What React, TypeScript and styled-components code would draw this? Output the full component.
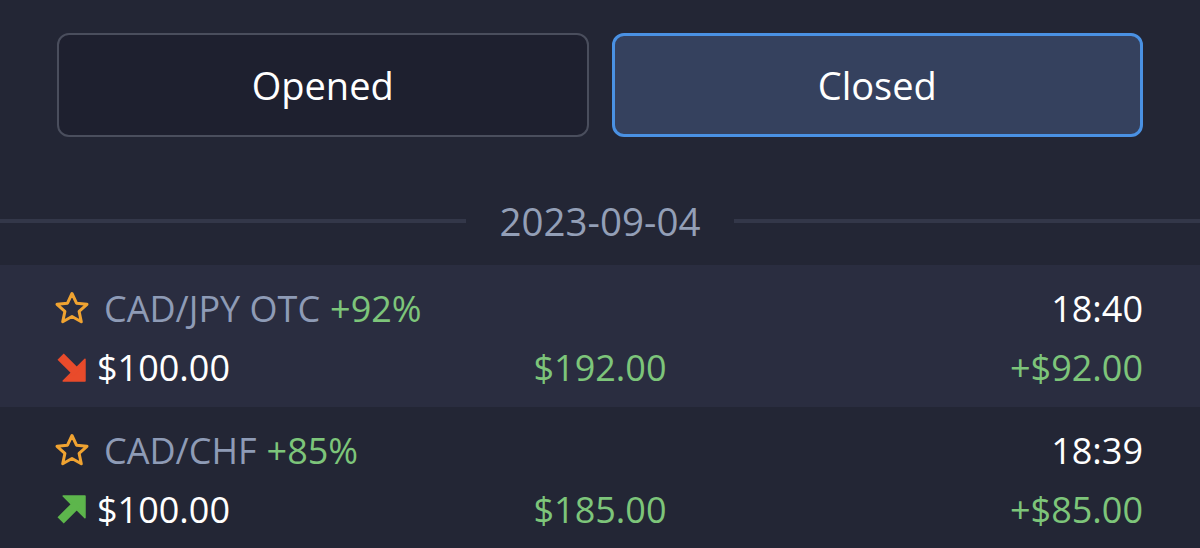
import styled, { createGlobalStyle } from "styled-components";

const GlobalStyle = createGlobalStyle`
  body {
    margin: 0;
    background: #232635;
    font-family: "Open Sans", "Noto Sans", sans-serif;
    color: #fff;
  }
`;

const Page = styled.div`
  width: 1200px;
  height: 548px;
  overflow: hidden;
  background: #232635;
`;

const Tabs = styled.div`
  display: grid;
  grid-template-columns: 1fr 1fr;
  gap: 23px;
  padding: 33px 57px 0;
`;

const Tab = styled.div<{ $active?: boolean }>`
  height: 104px;
  box-sizing: border-box;
  display: flex;
  align-items: center;
  justify-content: center;
  border-radius: 12px;
  font-size: 38px;
  color: #fff;
  background: ${(p) => (p.$active ? "#35415e" : "#1e202f")};
  border: ${(p) => (p.$active ? "3px solid #4a91e3" : "2px solid #4a4e5d")};
`;

const Separator = styled.div`
  display: flex;
  align-items: center;
  gap: 34px;
  height: 52px;
  margin: 58px 0 18px;
  &::before,
  &::after {
    content: "";
    flex: 1;
    height: 4px;
    background: #333749;
  }
`;

const DateLabel = styled.span`
  font-size: 38.5px;
  color: #939fb7;
`;

const Row = styled.div<{ $shaded?: boolean }>`
  background: ${(p) => (p.$shaded ? "#2a2d40" : "transparent")};
  padding: 18px 57px 15px;
  display: flex;
  flex-direction: column;
  gap: 9px;
`;

const Line = styled.div`
  height: 50px;
  display: grid;
  grid-template-columns: 1fr auto 1fr;
  align-items: center;
  font-size: 36px;
`;

const Asset = styled.div`
  display: flex;
  align-items: center;
  gap: 14px;
  color: #8e9bb6;
`;

const Payout = styled.span`
  color: #7dc57a;
  margin-left: -4px;
`;

const Bet = styled.div`
  display: flex;
  align-items: center;
  gap: 11px;
  color: #fff;
`;

const Amount = styled.span`
  color: #7dc57a;
`;

const Right = styled.span<{ $green?: boolean }>`
  justify-self: end;
  color: ${(p) => (p.$green ? "#7dc57a" : "#fff")};
`;

const Star = () => (
  <svg width="36" height="34" viewBox="0 0 36 34" style={{ marginLeft: -3 }}>
    <path
      d="M18 2.5 L22.5 12.2 L33 13.3 L25.1 20.4 L27.3 30.8 L18 25.5 L8.7 30.8 L10.9 20.4 L3 13.3 L13.5 12.2 Z"
      fill="none"
      stroke="#f0a331"
      strokeWidth="3"
      strokeLinejoin="round"
    />
  </svg>
);

const Arrow = ({ up }: { up?: boolean }) => (
  <svg
    width="29"
    height="29"
    viewBox="0 0 28 28"
    style={{ transform: up ? "scaleY(-1)" : undefined }}
  >
    <g fill={up ? "#5db64c" : "#e94b2b"} stroke={up ? "#5db64c" : "#e94b2b"}>
      <polygon points="27,27 27,6 6,27" strokeWidth="1.5" strokeLinejoin="round" />
      <line x1="3.5" y1="3.5" x2="19" y2="19" strokeWidth="8.5" />
    </g>
  </svg>
);

type Trade = {
  asset: string;
  payout: string;
  time: string;
  up: boolean;
  bet: string;
  total: string;
  profit: string;
};

const trades: Trade[] = [
  { asset: "CAD/JPY OTC", payout: "+92%", time: "18:40", up: false, bet: "$100.00", total: "$192.00", profit: "+$92.00" },
  { asset: "CAD/CHF", payout: "+85%", time: "18:39", up: true, bet: "$100.00", total: "$185.00", profit: "+$85.00" },
];

export default function App() {
  return (
    <Page>
      <GlobalStyle />
      <Tabs>
        <Tab>Opened</Tab>
        <Tab $active>Closed</Tab>
      </Tabs>
      <Separator>
        <DateLabel>2023-09-04</DateLabel>
      </Separator>
      {trades.map((t, i) => (
        <Row key={t.asset} $shaded={i % 2 === 0}>
          <Line>
            <Asset>
              <Star />
              <span>{t.asset}</span>
              <Payout>{t.payout}</Payout>
            </Asset>
            <span />
            <Right>{t.time}</Right>
          </Line>
          <Line>
            <Bet>
              <Arrow up={t.up} />
              <span>{t.bet}</span>
            </Bet>
            <Amount>{t.total}</Amount>
            <Right $green>{t.profit}</Right>
          </Line>
        </Row>
      ))}
    </Page>
  );
}
